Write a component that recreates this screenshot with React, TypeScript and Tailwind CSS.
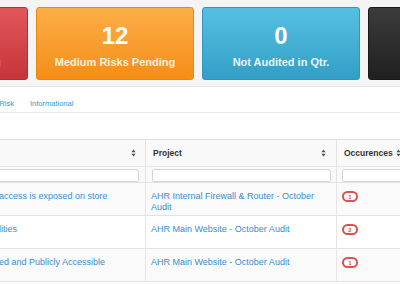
import React from 'react';

const cards = [
  { value: '4', label: 'High Risks Pending', className: 'bg-gradient-to-b from-[#e2575c] to-[#c5343a] border-[#b83036]', labelClass: 'text-[#fbe3e3]' },
  { value: '12', label: 'Medium Risks Pending', className: 'bg-gradient-to-b from-[#fcae45] to-[#f68d14] border-[#e9870f]', labelClass: 'text-[#fff1dc]' },
  { value: '0', label: 'Not Audited in Qtr.', className: 'bg-gradient-to-b from-[#55c0e2] to-[#339fc6] border-[#2f97bd]', labelClass: 'text-[#e6f6fb]' },
  { value: '7', label: 'Audits Completed', className: 'bg-gradient-to-b from-[#3c3c3c] to-[#202020] border-[#1a1a1a]', labelClass: 'text-[#dddddd]' },
];

const rows = [
  { issue: 'access is exposed on store', project: 'AHR Internal Firewall & Router - October Audit', count: 1 },
  { issue: 'lities', project: 'AHR Main Website - October Audit', count: 2 },
  { issue: 'ed and Publicly Accessible', project: 'AHR Main Website - October Audit', count: 1 },
];

const SortIcon = () => (
  <svg width="5" height="8" viewBox="0 0 5 8" className="shrink-0">
    <path d="M2.5 0.5 L4.7 3.3 H0.3 Z" fill="#555" />
    <path d="M2.5 7.5 L4.7 4.7 H0.3 Z" fill="#555" />
  </svg>
);

const App: React.FC = () => {
  return (
    <div className="w-[400px] h-[284px] overflow-hidden bg-white font-['Liberation_Sans',Arial,sans-serif]">
      {/* Stat cards */}
      <div className="h-[87px] bg-[#f4f4f4] border-b border-[#e3e3e3] pt-[7px]">
        <div className="flex gap-2 -ml-[130px]">
          {cards.map((c) => (
            <div
              key={c.label}
              className={`w-[158px] h-[73px] shrink-0 rounded-[3px] border flex flex-col items-center text-white ${c.className}`}
            >
              <div className="mt-[16px] text-[24px] font-bold leading-[24px]">{c.value}</div>
              <div className={`mt-[8px] text-[11px] font-bold leading-[13px] whitespace-nowrap ${c.labelClass}`}>{c.label}</div>
            </div>
          ))}
        </div>
      </div>

      {/* Tabs */}
      <div className="h-[26px] border-b border-[#ececec] flex items-start pt-[12px] text-[7.5px] leading-[10px] text-[#2f9bd8]">
        <span className="-ml-[32px] w-[46px] text-right whitespace-nowrap">Low Risk</span>
        <span className="ml-[16px]">Informational</span>
      </div>

      {/* Table */}
      <div className="mt-[26px] text-[9px]">
        <div className="bg-[#f9f9f9] border-t border-[#dddddd]">
          <div className="grid grid-cols-[146px_191px_100px] h-[27px] border-b border-[#e6e6e6] font-bold text-[8.5px] text-[#333]">
            <div className="flex items-center justify-end pr-[9px] border-r border-[#e2e2e2]">
              <SortIcon />
            </div>
            <div className="flex items-center justify-between pl-[7px] pr-[10px] border-r border-[#e2e2e2]">
              <span>Project</span>
              <SortIcon />
            </div>
            <div className="flex items-center gap-[3px] pl-[7px]">
              <span>Occurences</span>
              <SortIcon />
            </div>
          </div>
          <div className="grid grid-cols-[146px_191px_100px] h-[16px] border-b border-[#e2e2e2]">
            <div className="pt-[2px] pr-[6px] border-r border-[#e2e2e2]">
              <div className="h-[13px] bg-white border border-[#d6d6d6] rounded-[2px] -ml-[4px]" />
            </div>
            <div className="pt-[2px] pl-[6px] pr-[5px] border-r border-[#e2e2e2]">
              <div className="h-[13px] bg-white border border-[#d6d6d6] rounded-[2px]" />
            </div>
            <div className="pt-[2px] pl-[5px]">
              <div className="h-[13px] bg-white border border-[#d6d6d6] rounded-[2px]" />
            </div>
          </div>
        </div>

        {rows.map((r, i) => (
          <div
            key={i}
            className={`grid grid-cols-[146px_191px_100px] h-[33px] border-b border-[#e2e2e2] text-[#3a8ccd] leading-[11px] ${
              i % 2 === 0 ? 'bg-[#fafafa]' : 'bg-white'
            }`}
          >
            <div className="pt-[8px] -ml-[1px] border-r border-[#e6e6e6] whitespace-nowrap">{r.issue}</div>
            <div className="pt-[8px] pl-[5px] pr-[10px] border-r border-[#e6e6e6]">{r.project}</div>
            <div className="pt-[8px] pl-[5px]">
              <span className="flex items-center justify-center w-[16px] h-[11px] rounded-full border-2 border-[#d9534f] bg-white text-[6px] font-bold leading-none text-[#d9534f]">
                {r.count}
              </span>
            </div>
          </div>
        ))}
      </div>
    </div>
  );
};

export default App;
